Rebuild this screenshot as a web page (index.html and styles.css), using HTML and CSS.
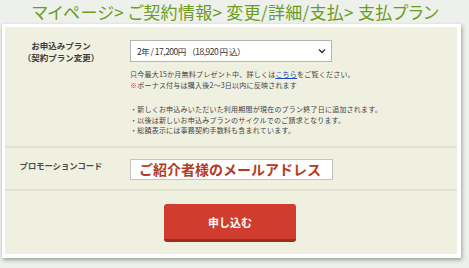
FILE: index.html
```html
<!DOCTYPE html>
<html lang="ja">
<head>
<meta charset="utf-8">
<link rel="stylesheet" href="styles.css">
</head>
<body>
<h1 class="title">マイページ&gt; ご契約情報&gt; 変更/詳細/支払&gt; 支払プラン</h1>
<div class="card">
  <div class="panel">
    <div class="row row-plan">
      <div class="label">お申込みプラン<br>（契約プラン変更）</div>
      <div class="content">
        <div class="select-box">
          <span class="select-text">2年 / 17,200円 （18,920 円 込）</span>
          <svg class="chev" width="8" height="6" viewBox="0 0 8 6"><path d="M1 1.5 L4 4.5 L7 1.5" fill="none" stroke="#333" stroke-width="1.4"/></svg>
        </div>
        <p class="note">只今最大15か月無料プレゼント中、詳しくは<a class="link" href="#">こちら</a>をご覧ください。<br><span class="mark">※</span>ボーナス付与は購入後2～3日以内に反映されます</p>
        <p class="note note-list">・新しくお申込みいただいた利用期間が現在のプラン終了日に追加されます。<br>・以後は新しいお申込みプランのサイクルでのご請求となります。<br>・総額表示には事務契約手数料も含まれています。</p>
      </div>
    </div>
    <div class="row row-promo">
      <div class="label label-promo">プロモーションコード</div>
      <div class="content">
        <div class="input-box">ご紹介者様のメールアドレス</div>
      </div>
    </div>
    <div class="row-submit">
      <button class="submit" type="button">申し込む</button>
    </div>
  </div>
</div>
</body>
</html>
```
FILE: styles.css
```css
html, body {
  margin: 0;
  padding: 0;
}
body {
  width: 469px;
  height: 268px;
  overflow: hidden;
  background: #eef0eb;
  font-family: "Noto Sans CJK JP", "Noto Sans", sans-serif;
  color: #333;
}
.title {
  margin: 0;
  height: 24px;
  line-height: 24px;
  font-size: 17px;
  font-weight: 400;
  letter-spacing: 0.3px;
  color: #6d9b22;
  text-align: center;
  font-feature-settings: "palt";
  padding-left: 2px;
  white-space: nowrap;
}
.card {
  margin-left: 2px;
  width: 452px;
  padding: 3px 4px 4px 3px;
  background: #fff;
  box-shadow: 1px 2px 4px rgba(0,0,0,0.35);
}
.panel {
  background: #f0f0e0;
}
.row {
  display: flex;
  border-bottom: 2px solid #e2e1cf;
}
.label {
  width: 112px;
  flex: none;
  text-align: center;
  font-size: 8.5px;
  line-height: 12px;
  font-weight: 700;
  color: #3d3d3d;
  padding-top: 12px;
}
.content {
  margin-left: 13px;
}
.row-plan {
  height: 119px;
}
.row-plan .content {
  padding-top: 13px;
}
.select-box {
  box-sizing: border-box;
  width: 202px;
  height: 22px;
  background: #fff;
  border: 1px solid #b4b4b4;
  display: flex;
  align-items: center;
  justify-content: space-between;
  padding: 0 5px 0 6px;
}
.select-text {
  font-size: 8.5px;
  letter-spacing: -0.5px;
  color: #333;
  white-space: pre;
}
.chev {
  display: block;
}
.note {
  margin: 7px 0 0;
  font-size: 7px;
  letter-spacing: 0.22px;
  line-height: 10.5px;
  color: #444;
  white-space: nowrap;
}
.note-list {
  margin-top: 14px;
}
.link {
  color: #1a4fc4;
  text-decoration: underline;
}
.mark {
  color: #e02020;
}
.row-promo {
  height: 41px;
}
.row-promo .content {
  padding-top: 11px;
}
.label-promo {
  padding-top: 11px;
  font-size: 8.3px;
  color: #4a4a4a;
}
.input-box {
  box-sizing: border-box;
  width: 203px;
  height: 21px;
  background: #fff;
  border: 1px solid #c4c4c4;
  padding-left: 8px;
  font-size: 14px;
  line-height: 19px;
  font-weight: 700;
  color: #b63b1c;
  white-space: nowrap;
}
.row-submit {
  display: flex;
  justify-content: center;
  padding: 13px 0 12px;
  padding-right: 2px;
}
.submit {
  width: 132px;
  height: 38px;
  margin: 0;
  padding: 0;
  border: none;
  border-bottom: 3px solid #9f2c21;
  border-radius: 3px;
  background: #d03d2e;
  color: #fff;
  font-family: "Noto Sans CJK JP", sans-serif;
  font-size: 11px;
  font-weight: 700;
}
```
